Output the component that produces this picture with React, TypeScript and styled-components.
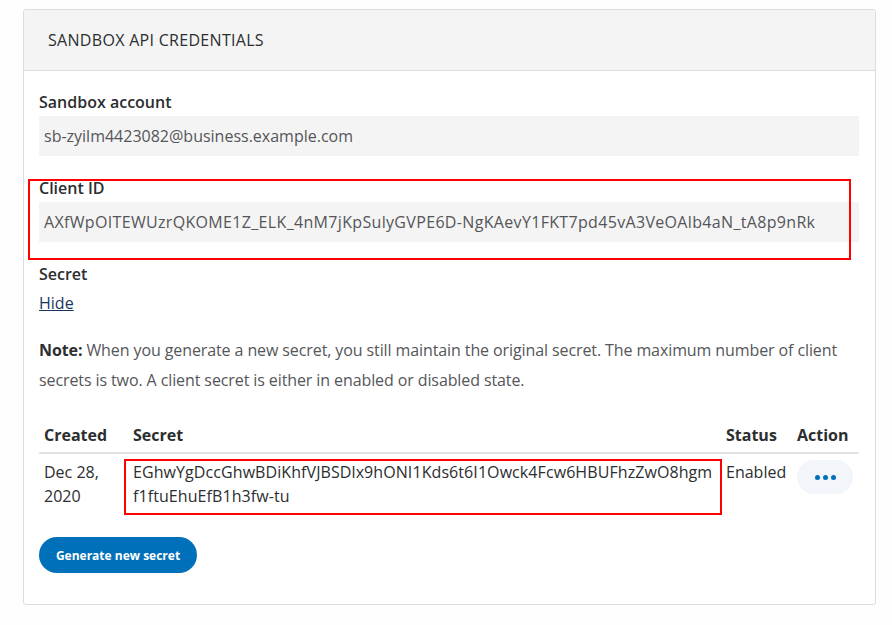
import React from "react";
import styled, { createGlobalStyle } from "styled-components";

const Global = createGlobalStyle`
  html, body { margin: 0; padding: 0; background: #fefefe; }
  body { font-family: "Open Sans", "Noto Sans", sans-serif; color: #2c2e2f; }
  * { box-sizing: border-box; }
`;

const Page = styled.div`
  padding: 9px 16px 20px 23px;
`;

const Card = styled.section`
  border: 1px solid #dcdcdc;
  border-radius: 3px;
  background: #fff;
  overflow: hidden;
`;

const CardHeader = styled.header`
  height: 61px;
  background: #f4f4f4;
  border-bottom: 1px solid #dcdcdc;
  display: flex;
  align-items: center;
  padding: 0 24px;
`;

const Title = styled.h2`
  margin: 0;
  font-size: 16px;
  font-weight: 400;
  text-transform: uppercase;
  color: #2c2e2f;
  letter-spacing: 0.3px;
`;

const Body = styled.div`
  padding: 19px 16px 31px 15px;
  display: flex;
  flex-direction: column;
`;

const Group = styled.div<{ $mark?: boolean; $gap?: number }>`
  position: relative;
  margin-top: ${(p) => p.$gap ?? 0}px;
  ${(p) =>
    p.$mark &&
    `&::after {
      content: "";
      position: absolute;
      left: -11px;
      right: 8px;
      top: 3px;
      bottom: -18px;
      border: 2px solid #ff0000;
      pointer-events: none;
    }`}
`;

const Label = styled.div`
  font-size: 16px;
  line-height: 24px;
  font-weight: 600;
  color: #2c2e2f;
`;

const Field = styled.div<{ $code?: boolean }>`
  margin-top: 2px;
  height: 40px;
  background: #f4f4f4;
  display: flex;
  align-items: center;
  padding: 0 5px;
  font-size: 16px;
  color: #545659;
  white-space: nowrap;
  overflow: hidden;
  letter-spacing: ${(p) => (p.$code ? "0.33px" : "0")};
`;

const Link = styled.a`
  margin-top: 2px;
  font-size: 16px;
  line-height: 30px;
  color: #1c3660;
  text-decoration: underline;
  align-self: flex-start;
`;

const Note = styled.p`
  margin: 17px 0 0;
  font-size: 16px;
  line-height: 30px;
  color: #545659;
  letter-spacing: -0.1px;
  b { color: #2c2e2f; font-weight: 700; }
`;

const Table = styled.table`
  margin-top: 28px;
  width: 100%;
  border-collapse: collapse;
  table-layout: fixed;
`;

const Th = styled.th<{ $w?: number }>`
  width: ${(p) => (p.$w ? `${p.$w}px` : "auto")};
  text-align: left;
  font-size: 16px;
  font-weight: 700;
  line-height: 24px;
  padding: 0 5px 5px;
  color: #2c2e2f;
  border-bottom: 2px solid #e4e4e4;
`;

const Td = styled.td<{ $mark?: boolean }>`
  position: relative;
  vertical-align: top;
  font-size: 16px;
  line-height: 24px;
  padding: 6px 5px 6px;
  color: #2c2e2f;
  ${(p) =>
    p.$mark &&
    `word-break: break-all;
    letter-spacing: 0.08px;
    &::after {
      content: "";
      position: absolute;
      left: -4px;
      right: -1px;
      top: 5px;
      bottom: -1px;
      border: 2px solid #ff0000;
      pointer-events: none;
    }`}
`;

const DotsButton = styled.button`
  width: 56px;
  height: 34px;
  border: none;
  border-radius: 17px;
  background: #f2f5f9;
  display: flex;
  align-items: center;
  justify-content: center;
  gap: 3px;
  padding: 0;
  cursor: pointer;
`;

const Dot = styled.span`
  width: 5px;
  height: 5px;
  border-radius: 50%;
  background: #0070ba;
`;

const Primary = styled.button`
  margin-top: 23px;
  align-self: flex-start;
  height: 36px;
  width: 158px;
  padding: 0;
  border: none;
  border-radius: 18px;
  background: #0070ba;
  color: #fff;
  font-family: "Open Sans", "Noto Sans", sans-serif;
  font-size: 12px;
  font-weight: 700;
  cursor: pointer;
`;

export default function App() {
  return (
    <>
      <Global />
      <Page>
        <Card>
          <CardHeader>
            <Title>Sandbox API Credentials</Title>
          </CardHeader>
          <Body>
            <Group>
              <Label>Sandbox account</Label>
              <Field>sb-zyilm4423082@business.example.com</Field>
            </Group>
            <Group $mark $gap={20}>
              <Label>Client ID</Label>
              <Field $code>AXfWpOITEWUzrQKOME1Z_ELK_4nM7jKpSulyGVPE6D-NgKAevY1FKT7pd45vA3VeOAlb4aN_tA8p9nRk</Field>
            </Group>
            <Group $gap={20}>
              <Label>Secret</Label>
            </Group>
            <Link href="#">Hide</Link>
            <Note>
              <b>Note:</b> When you generate a new secret, you still maintain the original secret. The maximum number of client secrets is two. A client secret is either in enabled or disabled state.
            </Note>
            <Table>
              <thead>
                <tr>
                  <Th $w={89}>Created</Th>
                  <Th>Secret</Th>
                  <Th $w={71}>Status</Th>
                  <Th $w={67}>Action</Th>
                </tr>
              </thead>
              <tbody>
                <tr>
                  <Td>Dec 28, 2020</Td>
                  <Td $mark>EGhwYgDccGhwBDiKhfVJBSDlx9hONI1Kds6t6I1Owck4Fcw6HBUFhzZwO8hgmf1ftuEhuEfB1h3fw-tu</Td>
                  <Td>Enabled</Td>
                  <Td>
                    <DotsButton aria-label="More actions">
                      <Dot />
                      <Dot />
                      <Dot />
                    </DotsButton>
                  </Td>
                </tr>
              </tbody>
            </Table>
            <Primary>Generate new secret</Primary>
          </Body>
        </Card>
      </Page>
    </>
  );
}
